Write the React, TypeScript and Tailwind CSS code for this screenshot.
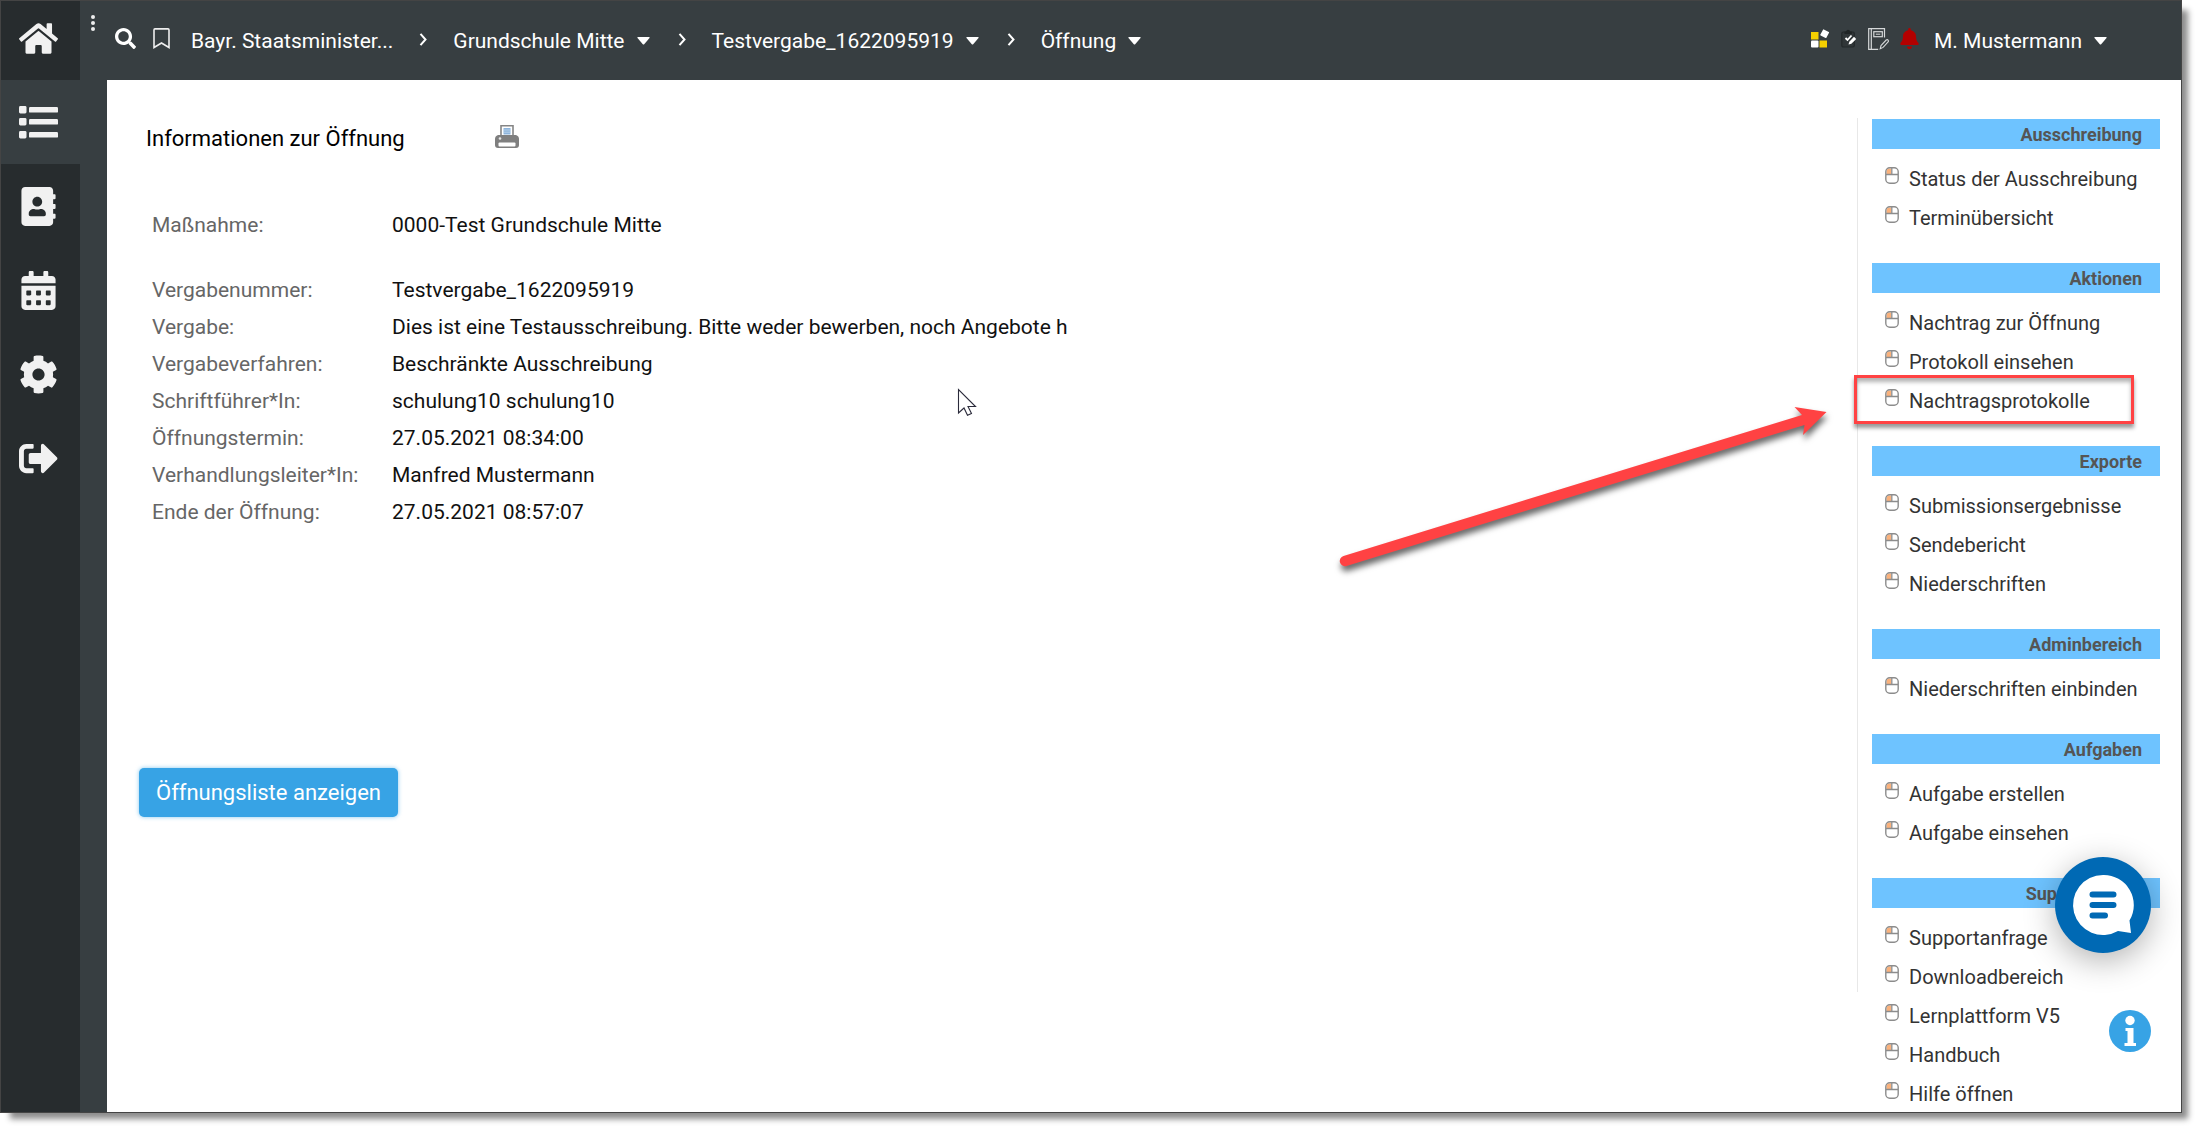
import type { ReactNode } from "react";
import {
  FaHome,
  FaAddressBook,
  FaCalendarAlt,
  FaCog,
  FaSignOutAlt,
  FaSearch,
  FaBell,
} from "react-icons/fa";

function ListIcon() {
  return (
    <svg viewBox="0 0 39 33" className="h-[33px] w-[39px] fill-current" aria-hidden="true">
      {[0, 12, 25].map((y) => (
        <g key={y}>
          <rect x="0" y={y} width="7.5" height="7.5" rx="1.4" />
          <rect x="10" y={y + 1} width="29" height="5.6" rx="1.2" />
        </g>
      ))}
    </svg>
  );
}

const navItems: { label: string; icon: ReactNode; active?: boolean }[] = [
  { label: "Startseite", icon: <FaHome className="size-[39px]" /> },
  { label: "Liste", icon: <ListIcon />, active: true },
  { label: "Kontakte", icon: <FaAddressBook className="size-[39px]" /> },
  { label: "Kalender", icon: <FaCalendarAlt className="size-[39px]" /> },
  { label: "Einstellungen", icon: <FaCog className="size-[39px]" /> },
  { label: "Abmelden", icon: <FaSignOutAlt className="size-[39px]" /> },
];

const rows = [
  ["Maßnahme:", "0000-Test Grundschule Mitte"],
  ["Vergabenummer:", "Testvergabe_1622095919"],
  ["Vergabe:", "Dies ist eine Testausschreibung. Bitte weder bewerben, noch Angebote h"],
  ["Vergabeverfahren:", "Beschränkte Ausschreibung"],
  ["Schriftführer*In:", "schulung10 schulung10"],
  ["Öffnungstermin:", "27.05.2021 08:34:00"],
  ["Verhandlungsleiter*In:", "Manfred Mustermann"],
  ["Ende der Öffnung:", "27.05.2021 08:57:07"],
];

const sections = [
  { title: "Ausschreibung", items: ["Status der Ausschreibung", "Terminübersicht"] },
  { title: "Aktionen", items: ["Nachtrag zur Öffnung", "Protokoll einsehen", "Nachtragsprotokolle"] },
  { title: "Exporte", items: ["Submissionsergebnisse", "Sendebericht", "Niederschriften"] },
  { title: "Adminbereich", items: ["Niederschriften einbinden"] },
  { title: "Aufgaben", items: ["Aufgabe erstellen", "Aufgabe einsehen"] },
  {
    title: "Supportcenter",
    items: ["Supportanfrage", "Downloadbereich", "Lernplattform V5", "Handbuch", "Hilfe öffnen"],
  },
];

function Caret() {
  return (
    <svg viewBox="0 0 13 8" className="mb-[2px] h-2 w-[13px] fill-white" aria-hidden="true">
      <path d="M1 0h11q1.200 0 .5 1L7.200 7.200q-.7.7-1.400 0L.5 1Q-.2 0 1 0Z" />
    </svg>
  );
}

function Chevron() {
  return (
    <svg viewBox="0 0 8 13" className="mb-1 h-[13px] w-2 shrink-0 fill-none stroke-white stroke-2" aria-hidden="true">
      <path d="M1.500 .8 6.500 6.500l-5 5.700" />
    </svg>
  );
}

function Crumb({ text }: { text: string }) {
  return (
    <button type="button" className="flex items-center gap-3 whitespace-nowrap">
      {text}
      <Caret />
    </button>
  );
}

function MouseIcon() {
  return (
    <svg viewBox="0 0 14 17" className="mb-[6px] h-[17px] w-[14px] shrink-0" aria-hidden="true">
      <path d="M1.500 7.500V4.500a3 3 0 0 1 3-3H6v6Z" fill="#fbb27c" />
      <rect x=".8" y=".8" width="12.400" height="15.400" rx="4" fill="none" stroke="#8c8c8c" strokeWidth="1.400" />
      <path d="M1 7.500h12M6.800 1v6.500" fill="none" stroke="#8c8c8c" strokeWidth="1.300" />
    </svg>
  );
}

function PrinterIcon() {
  return (
    <svg viewBox="0 0 24 23" className="h-[23px] w-6" aria-hidden="true">
      <path d="M6 11V.8h12V11" fill="#fff" stroke="#858585" strokeWidth="1.600" />
      <path d="M8.500 3h7v6.500h-7Z" fill="#8db4dc" />
      <path d="M8.500 5h7M8.500 7.200h7" stroke="#c9dcf0" strokeWidth=".7" />
      <path d="M3 10h18q3 1 3 4v6q0 3-3 3H3q-3 0-3-3v-6q0-3 3-4Z" fill="#7f7f7f" />
      <circle cx="5" cy="13.500" r="1.300" fill="#e8e8e8" />
      <rect x="3.500" y="17.500" width="17" height="4" rx="1" fill="#fff" />
    </svg>
  );
}

function ModulesIcon() {
  return (
    <svg viewBox="0 0 19 19" className="size-[19px]" aria-hidden="true">
      <rect x="0" y="3" width="7.500" height="7.500" fill="#f5d000" />
      <rect x="0" y="11.500" width="7.500" height="7" rx="1" fill="#fff" />
      <rect x="8.500" y="11.500" width="7.500" height="7" fill="#f5d000" />
      <rect x="10.300" y="1.300" width="6.800" height="6.800" rx=".6" fill="#fff" transform="rotate(28 13.700 4.700)" />
    </svg>
  );
}

function ClipboardIcon() {
  return (
    <svg viewBox="0 0 16 19" className="h-[19px] w-4" aria-hidden="true">
      <rect x=".8" y="3" width="12.500" height="15" rx="1.500" fill="#303638" stroke="#23282a" strokeWidth="1.200" />
      <path d="M3.500 5V2.500H5Q6-.2 8.500 1.200l.8 1.300h1.500V5Z" fill="#1f2425" />
      <path d="m4.500 9 2 2L10.500 6.500" fill="none" stroke="#fff" strokeWidth="1.800" />
      <path d="m7.500 15.500.8-2.800 4.700-4.900 2.200 2.100-4.800 4.800Z" fill="#fff" />
    </svg>
  );
}

function NotebookIcon() {
  return (
    <svg viewBox="0 0 21 22" className="h-[22px] w-[21px] fill-none stroke-[#d5d8d9]" aria-hidden="true">
      <path d="M16.500 9.500V.7H.7v20.600h9.500M3.300.7v20.600" strokeWidth="1.200" />
      <rect x="5.800" y="3.700" width="8.500" height="5" strokeWidth="1.200" />
      <path d="M7.800 6.200h4.500" strokeWidth="1" />
      <path d="m12.200 20.800.8-3.300 5.200-5.500q1.200-.8 2 .3.600 1-.3 1.800l-4.800 5.300Z" strokeWidth="1.100" />
    </svg>
  );
}

export default function App() {
  return (
    <div className="h-screen overflow-hidden bg-white pr-[15px] pb-[15px] font-['Roboto',sans-serif]">
      <div className="relative h-full shadow-[8px_8px_6px_-2px_rgba(0,0,0,0.45)]">
        <div className="flex h-full overflow-hidden border border-[#444] bg-[#373e41]">
          <nav className="w-[79px] shrink-0 bg-[#272c2e]" aria-label="Hauptnavigation">
            <ul>
              {navItems.map((item, i) => (
                <li key={item.label}>
                  <a
                    href="#"
                    aria-label={item.label}
                    className={`flex items-center justify-center pr-1 text-[#f1f1f1] ${i === 0 ? "h-[79px] pb-1" : "h-[84px]"} ${item.active ? "bg-[#373e41]" : ""}`}
                  >
                    {item.icon}
                  </a>
                </li>
              ))}
            </ul>
          </nav>

          <div className="flex min-w-0 flex-1 flex-col">
            <header className="flex h-[79px] shrink-0 items-center pt-[2px] text-[21px] text-white">
              <button type="button" aria-label="Menü" className="ml-[11px] flex flex-col gap-[2px] self-start pt-3">
                <span className="size-1 rounded-full bg-[#eee]" />
                <span className="size-1 rounded-full bg-[#eee]" />
                <span className="size-1 rounded-full bg-[#eee]" />
              </button>
              <button type="button" aria-label="Suche" className="ml-5 pb-[6px]">
                <FaSearch className="size-[21px]" />
              </button>
              <button type="button" aria-label="Lesezeichen" className="ml-[17px] pb-[6px]">
                <svg viewBox="0 0 17 21" className="h-[21px] w-[17px] fill-none stroke-[#eee]" strokeWidth="1.600">
                  <path d="M1 19.500V2Q1 .9 2 .9h13q1 0 1 1.100v17.500l-7.500-4.500Z" />
                </svg>
              </button>
              <nav aria-label="Brotkrumen" className="ml-[21px] flex items-center">
                <a href="#" className="mr-[26px] whitespace-nowrap">
                  Bayr. Staatsminister...
                </a>
                <Chevron />
                <div className="mr-7 ml-[26px]"><Crumb text="Grundschule Mitte" /></div>
                <Chevron />
                <div className="mr-7 ml-[26px]"><Crumb text="Testvergabe_1622095919" /></div>
                <Chevron />
                <div className="ml-[26px]"><Crumb text="Öffnung" /></div>
              </nav>
              <div className="mr-[74px] ml-auto flex items-center">
                <div className="mr-[15px] flex items-center gap-[11px] pb-[6px]">
                  <button type="button" aria-label="Module"><ModulesIcon /></button>
                  <button type="button" aria-label="Aufgaben"><ClipboardIcon /></button>
                  <button type="button" aria-label="Notizen"><NotebookIcon /></button>
                  <button type="button" aria-label="Benachrichtigungen">
                    <FaBell className="h-[21px] w-[19px] text-[#b30000]" />
                  </button>
                </div>
                <Crumb text="M. Mustermann" />
              </div>
            </header>

            <div className="ml-[27px] flex min-h-0 flex-1 bg-white pr-[21px]">
              <main className="min-w-0 flex-1 pl-8">
                <div className="mt-[42px] flex items-center gap-[90px] pl-[7px]">
                  <h1 className="text-[22px] leading-[34px] text-black">Informationen zur Öffnung</h1>
                  <button type="button" aria-label="Drucken" className="pb-[6px]">
                    <PrinterIcon />
                  </button>
                </div>
                <table className="mt-[51px] ml-[13px] text-[21px]">
                  <tbody>
                    {rows.map(([label, value], i) => (
                      <tr key={label} className={i === 0 ? "h-[65px] align-top" : "h-[37px] align-top"}>
                        <th scope="row" className="w-[240px] p-0 text-left leading-[37px] font-normal text-[#666]">
                          {label}
                        </th>
                        <td className="p-0 leading-[37px] text-[#111]">{value}</td>
                      </tr>
                    ))}
                  </tbody>
                </table>
                <button
                  type="button"
                  className="mt-[237px] h-[49px] rounded-[5px] bg-[#37a3e5] px-[17px] text-[22px] whitespace-nowrap text-white shadow-[0_0_4px_rgba(55,163,229,0.6)]"
                >
                  Öffnungsliste anzeigen
                </button>
              </main>

              <aside className="mt-[38px] h-[874px] w-[303px] shrink-0 border-l border-[#e8e8e8] pt-px pl-[14px]">
                {sections.map((section) => (
                  <section key={section.title} className="mb-[26px]">
                    <h2 className="mb-[10px] h-[30px] bg-[#6ec3ff] pr-[18px] text-right text-[18px] leading-[32px] font-bold text-[#555]">
                      {section.title}
                    </h2>
                    <ul>
                      {section.items.map((item) => (
                        <li key={item} className="relative">
                          <a
                            href="#"
                            className="flex h-[39px] items-center gap-[10px] pl-[13px] text-[20px] whitespace-nowrap text-[#333]"
                          >
                            <MouseIcon />
                            {item}
                          </a>
                          {item === "Nachtragsprotokolle" && (
                            <span className="pointer-events-none absolute -top-[6px] -bottom-[4px] -left-[18px] w-[280px] border-3 border-[#ff4243] shadow-[0_4px_4px_rgba(0,0,0,0.4),inset_0_4px_4px_rgba(0,0,0,0.3)]" />
                          )}
                        </li>
                      ))}
                    </ul>
                  </section>
                ))}
              </aside>
            </div>
          </div>
        </div>

        <svg
          viewBox="0 0 500 180"
          className="pointer-events-none absolute top-[400px] right-[347px] h-[180px] w-[500px] drop-shadow-[1px_5px_3px_rgba(0,0,0,0.6)]"
          aria-hidden="true"
        >
          <path
            d="M8.500 156 467 15 459.500 7 491.500 12 468 35 469.500 25 11.500 166A5.200 5.200 0 0 1 8.500 156Z"
            fill="#ff4243"
          />
        </svg>

        <svg
          viewBox="0 0 20 28"
          className="pointer-events-none absolute top-[388px] left-[957px] h-7 w-5"
          aria-hidden="true"
        >
          <path d="M1.500 1.500v23.500l5.500-5 3.500 7.300 4-1.800-3.500-7h7.500Z" fill="#fff" stroke="#2b2b3b" strokeWidth="1.100" />
        </svg>

        <button
          type="button"
          aria-label="Chat öffnen"
          className="absolute right-[31px] bottom-40 size-24 rounded-full bg-[#0069b4] shadow-[0_8px_32px_rgba(0,0,0,0.3)]"
        >
          <svg viewBox="0 0 96 96" className="size-24" aria-hidden="true">
            <path d="M48 18a30 30 0 1 0 15 56l13 2-1.500-12.500A30 30 0 0 0 48 18Z" fill="#fff" />
            <path d="M37.500 37.500h21M37.500 48h21M37.500 58.500H50" stroke="#0069b4" strokeWidth="6" strokeLinecap="round" />
          </svg>
        </button>

        <button
          type="button"
          aria-label="Information"
          className="absolute right-[31px] bottom-[61px] size-[42px] rounded-full bg-[#37a3e5]"
        >
          <svg viewBox="0 0 42 42" className="size-[42px] fill-white" aria-hidden="true">
            <circle cx="21" cy="10.500" r="4.700" />
            <path d="M16.500 18h8v15h2.500v3H15.500v-3h3V21h-2Z" />
          </svg>
        </button>
      </div>
    </div>
  );
}
